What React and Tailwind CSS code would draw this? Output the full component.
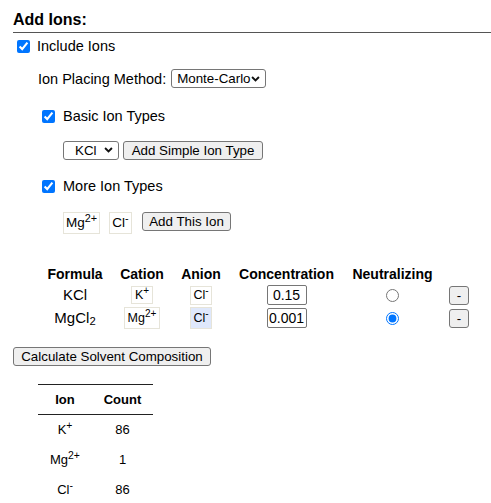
import React from "react";

const Chevron = () => (
  <svg
    viewBox="0 0 10 7"
    className="pointer-events-none absolute right-[6px] top-1/2 w-[9px] h-[6px] -translate-y-1/2"
  >
    <path d="M1 1.2 L5 5.2 L9 1.2" fill="none" stroke="#111" strokeWidth="2.2" />
  </svg>
);

const Sup = ({ children }) => (
  <sup className="text-[80%] -top-[0.45em]">{children}</sup>
);

const Select = ({ children, className }) => (
  <span className="relative inline-flex">
    <select
      className={
        "appearance-none h-[19px] border border-[#767676] rounded-[3px] bg-white text-[13.33px] leading-[17px] text-black " +
        className
      }
    >
      {children}
    </select>
    <Chevron />
  </span>
);

const Button = ({ children, className = "" }) => (
  <button
    className={
      "h-[19px] border border-[#767676] rounded-[3px] bg-[#efefef] text-[13.33px] leading-[17px] text-black " +
      className
    }
  >
    {children}
  </button>
);

const Check = ({ className = "" }) => (
  <input
    type="checkbox"
    defaultChecked
    className={"w-[13px] h-[13px] accent-[#0075ff] " + className}
  />
);

const IonBox = ({ children, className = "" }) => (
  <span
    className={
      "inline-flex items-center justify-center border border-[#e6e4d9] leading-none " +
      className
    }
  >
    {children}
  </span>
);

const rows = [
  { formula: <>KCl</>, cation: <>K<Sup>+</Sup></>, cw: "w-[22px] h-[18px]", conc: "0.15", on: false },
  { formula: <>MgCl<sub>2</sub></>, cation: <>Mg<Sup>2+</Sup></>, cw: "w-[36px] h-[22px]", conc: "0.001", on: true },
];

const counts = [
  [<>K<Sup>+</Sup></>, 86],
  [<>Mg<Sup>2+</Sup></>, 1],
  [<>Cl<Sup>-</Sup></>, 86],
];

export default function App() {
  return (
    <div className="min-h-screen bg-white pl-[13px] text-[14.5px] text-black font-['Liberation_Sans',Arial,sans-serif]">
      {/* Heading */}
      <div className="pt-[11px] pb-[3px] border-b border-[#555] text-[16px] leading-[18px] font-bold">
        Add Ions:
      </div>

      <div className="mt-[5px] h-[16px] flex items-center">
        <Check className="ml-[4px]" />
        <span className="ml-[7px] pt-[2px]">Include Ions</span>
      </div>

      <div className="mt-[15px] h-[20px] flex items-center pl-[25px]">
        <span className="pt-[1px]">Ion Placing Method:</span>
        <span className="ml-[5px]">
          <Select className="w-[95px] pl-[5px]">
            <option>Monte-Carlo</option>
          </Select>
        </span>
      </div>

      <div className="mt-[19px] h-[16px] flex items-center">
        <Check className="ml-[29px]" />
        <span className="ml-[8px] pt-[2px]">Basic Ion Types</span>
      </div>

      <div className="mt-[16px] h-[20px] flex items-center gap-[4px] pl-[50px]">
        <Select className="w-[56px] pl-[11px]">
          <option>KCl</option>
        </Select>
        <Button className="w-[140px]">Add Simple Ion Type</Button>
      </div>

      <div className="mt-[18px] h-[16px] flex items-center">
        <Check className="ml-[29px]" />
        <span className="ml-[8px] pt-[2px]">More Ion Types</span>
      </div>

      <div className="mt-[18px] flex items-start pl-[50px] text-[13.5px]">
        <IonBox className="w-[37px] h-[22px]">
          Mg<Sup>2+</Sup>
        </IonBox>
        <IonBox className="ml-[9px] w-[23px] h-[22px]">
          Cl<Sup>-</Sup>
        </IonBox>
        <Button className="ml-[10px] w-[89px]">Add This Ion</Button>
      </div>

      {/* Ion table */}
      <div className="mt-[30px] ml-[25px] grid grid-cols-[74px_60px_58px_113px_99px_34px] items-center text-center text-[14px]">
        <div className="h-[20px] font-bold leading-[20px]">Formula</div>
        <div className="h-[20px] font-bold leading-[20px]">Cation</div>
        <div className="h-[20px] font-bold leading-[20px]">Anion</div>
        <div className="h-[20px] font-bold leading-[20px]">Concentration</div>
        <div className="h-[20px] font-bold leading-[20px]">Neutralizing</div>
        <div className="h-[20px]" />
        {rows.map((r, i) => (
          <React.Fragment key={i}>
            <div className={(i ? "h-[24px] " : "h-[22px] ") + "flex items-center justify-center text-[15px]"}>
              {r.formula}
            </div>
            <div className={(i ? "h-[24px] " : "h-[22px] ") + "flex items-center justify-center"}>
              <IonBox className={r.cw + " text-[12.5px]"}>{r.cation}</IonBox>
            </div>
            <div className={(i ? "h-[24px] " : "h-[22px] ") + "flex items-center justify-center"}>
              <IonBox className={"w-[22px] text-[12.5px] " + (i ? "h-[22px] bg-[#dfe8fb]" : "h-[19px]")}>
                Cl<Sup>-</Sup>
              </IonBox>
            </div>
            <div className={(i ? "h-[24px] " : "h-[22px] ") + "flex items-center justify-center"}>
              <input
                type="text"
                defaultValue={r.conc}
                className="w-[40px] h-[20px] border border-[#767676] rounded-[2px] bg-white text-center text-[14px]"
              />
            </div>
            <div className={(i ? "h-[24px] " : "h-[22px] ") + "flex items-center justify-center"}>
              <input
                type="radio"
                name="neutral"
                defaultChecked={r.on}
                className="w-[13px] h-[13px] accent-[#0075ff]"
              />
            </div>
            <div className={(i ? "h-[24px] " : "h-[22px] ") + "flex items-center justify-center"}>
              <Button className="w-[20px] px-0">-</Button>
            </div>
          </React.Fragment>
        ))}
      </div>

      <div className="mt-[16px]">
        <Button className="w-[198px]">Calculate Solvent Composition</Button>
      </div>

      {/* Count table */}
      <div className="mt-[16px] ml-[25px] w-[115px] border-t border-[#222] text-[13px] text-center">
        <div className="grid grid-cols-[54px_61px] h-[30px] items-center font-bold border-b border-[#222]">
          <div>Ion</div>
          <div>Count</div>
        </div>
        {counts.map(([ion, n], i) => (
          <div key={i} className="grid grid-cols-[54px_61px] h-[30px] items-center">
            <div>{ion}</div>
            <div>{n}</div>
          </div>
        ))}
      </div>
    </div>
  );
}
